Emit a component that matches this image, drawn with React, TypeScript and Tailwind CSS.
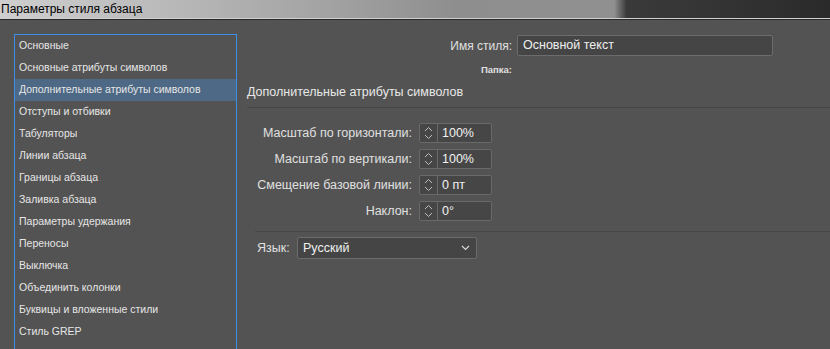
const items = [
  "Основные",
  "Основные атрибуты символов",
  "Дополнительные атрибуты символов",
  "Отступы и отбивки",
  "Табуляторы",
  "Линии абзаца",
  "Границы абзаца",
  "Заливка абзаца",
  "Параметры удержания",
  "Переносы",
  "Выключка",
  "Объединить колонки",
  "Буквицы и вложенные стили",
  "Стиль GREP",
];

const spinners = [
  { label: "Масштаб по горизонтали:", value: "100%" },
  { label: "Масштаб по вертикали:", value: "100%" },
  { label: "Смещение базовой линии:", value: "0 пт" },
  { label: "Наклон:", value: "0°" },
];

export default function App() {
  return (
    <div
      className="w-[830px] h-[349px] overflow-hidden flex flex-col bg-[#535353]"
      style={{ fontFamily: '"Liberation Sans", Arial, sans-serif' }}
    >
      {/* window title */}
      <div className="h-[18px] shrink-0 flex items-center bg-[linear-gradient(90deg,#cfcfcf_0%,#b9b9b9_20%,#a2a2a2_40%,#8e8e8e_55%,#909090_74%,#3a3a3a_75.5%,#333333_88%,#2a2a2a_100%)]">
        <span className="text-[12px] leading-none text-black pl-[1px]">Параметры стиля абзаца</span>
      </div>
      <div className="h-[1px] shrink-0 bg-[#cfcfcf]" />
      <div className="h-[1px] shrink-0 bg-[#2a2a2a]" />

      <div className="flex flex-1 min-h-0">
        {/* category list */}
        <div className="pl-[14px] pt-[14px] w-[237px] shrink-0">
          <div className="border border-b-0 border-[#3d8ee6] h-full">
            {items.map((it, i) => (
              <div
                key={it}
                className={`h-[22px] flex items-center pl-[4px] text-[10.5px] text-[#e6e6e6] ${i === 2 ? "bg-[#4d6985]" : ""}`}
              >
                {it}
              </div>
            ))}
          </div>
        </div>

        {/* settings */}
        <div className="flex-1 pt-[15px] pl-[10px]">
          <div className="flex items-center h-[21px]">
            <div className="w-[270px] text-right text-[12px] text-[#e0e0e0] pr-[5px]">Имя стиля:</div>
            <div className="w-[256px] h-[21px] border border-[#6c6c6c] rounded-[2px] bg-[#454545] flex items-center pl-[5px] text-[12.5px] text-[#f0f0f0]">
              Основной текст
            </div>
          </div>
          <div className="flex items-center h-[14px] mt-[7px]">
            <div className="w-[270px] text-right text-[9.5px] font-bold text-[#e0e0e0] pr-[5px]">Папка:</div>
          </div>
          <div className="h-[20px] mt-[5px] flex items-center text-[12.5px] text-[#e8e8e8]">
            Дополнительные атрибуты символов
          </div>
          <div className="h-[1px] bg-[#474747] mt-[5px]" />

          <div className="pt-[15px] flex flex-col gap-[6px]">
            {spinners.map((s) => (
              <div key={s.label} className="flex items-center h-[20px]">
                <div className="w-[165px] text-right text-[12.5px] text-[#e0e0e0]">{s.label}</div>
                <div className="ml-[7px] w-[73px] h-[20px] flex border border-[#696969] rounded-[2px] bg-[#464646]">
                  <div className="w-[18px] flex flex-col items-center justify-center border-r border-[#696969]">
                    <svg width="9" height="16" viewBox="0 0 9 16" fill="none" stroke="#bdbdbd" strokeWidth="1">
                      <path d="M1 6 L4.5 2.5 L8 6" />
                      <path d="M1 10 L4.5 13.5 L8 10" />
                    </svg>
                  </div>
                  <div className="flex items-center pl-[4px] text-[12.5px] text-[#f2f2f2]">{s.value}</div>
                </div>
              </div>
            ))}
          </div>

          <div className="h-[1px] bg-[#474747] mt-[10px] ml-[8px]" />

          <div className="flex items-center mt-[5px] pl-[10px]">
            <div className="text-[12.5px] text-[#e0e0e0] w-[40px]">Язык:</div>
            <div className="w-[180px] h-[22px] border border-[#6c6c6c] rounded-[2px] bg-[#454545] flex items-center justify-between pl-[5px] pr-[6px] text-[12.5px] text-[#f0f0f0]">
              <span>Русский</span>
              <svg width="9" height="6" viewBox="0 0 9 6" fill="none" stroke="#d8d8d8" strokeWidth="1.2">
                <path d="M1 1 L4.5 4.5 L8 1" />
              </svg>
            </div>
          </div>
        </div>
      </div>
    </div>
  );
}
